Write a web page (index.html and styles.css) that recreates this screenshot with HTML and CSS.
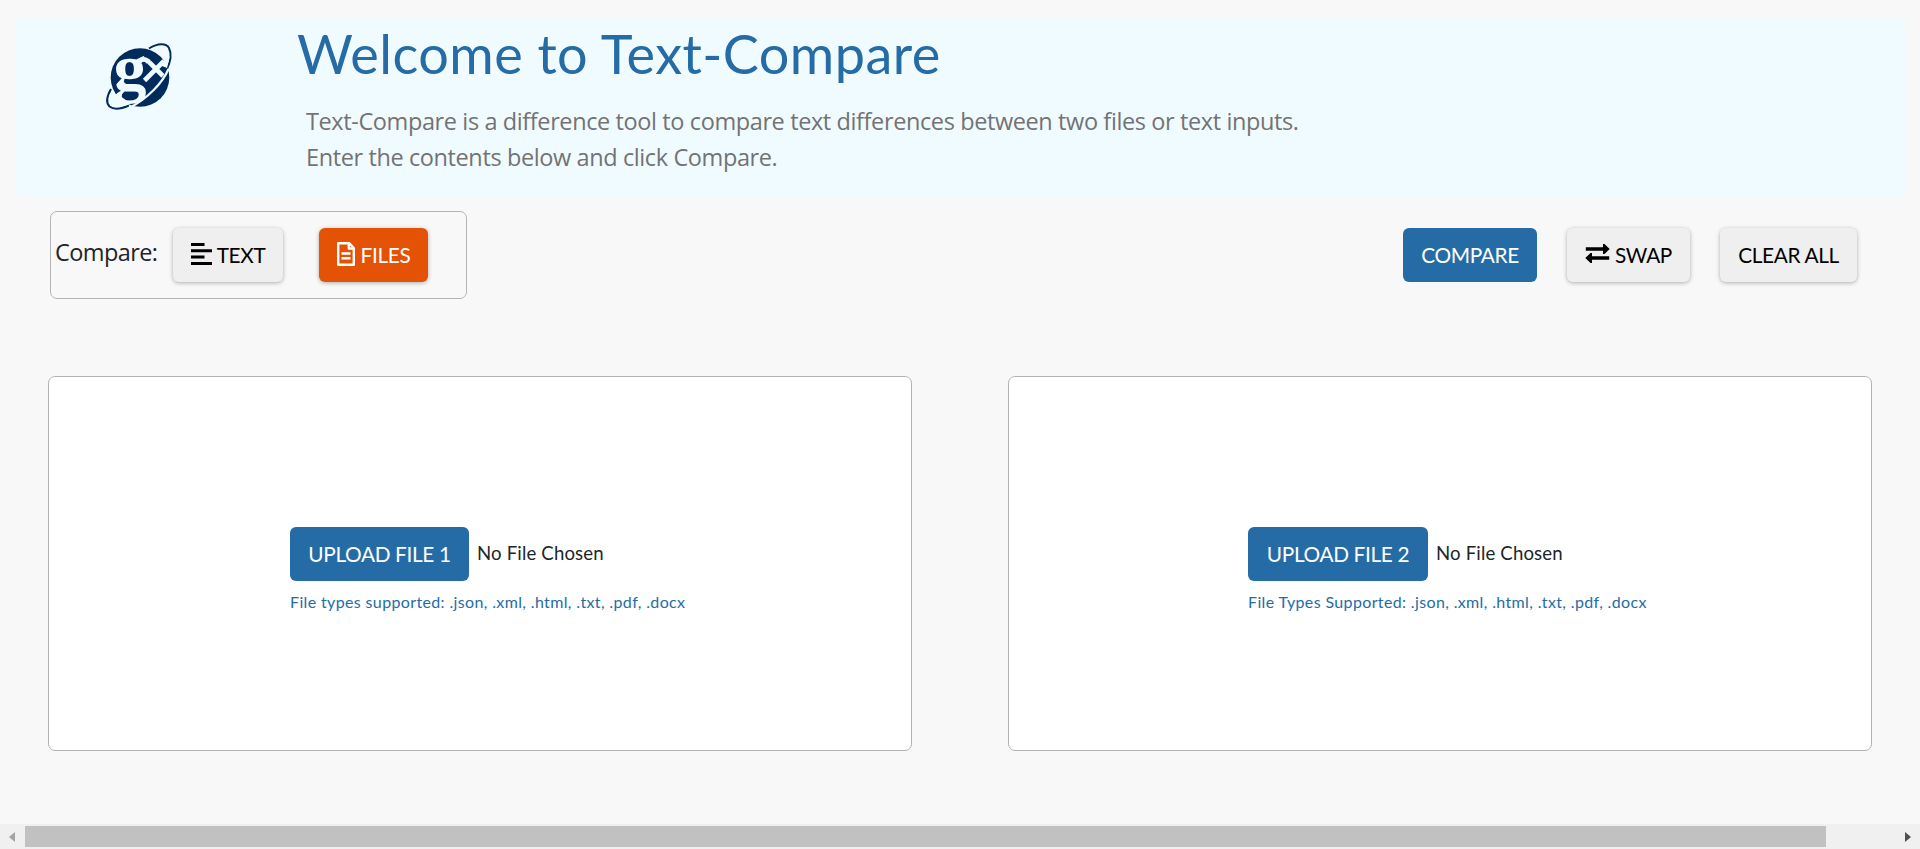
FILE: index.html
```html
<!DOCTYPE html>
<html lang="en">
<head>
<meta charset="utf-8">
<title>Text-Compare</title>
<link rel="stylesheet" href="styles.css">
</head>
<body>
<div class="page">
  <header class="banner">
    <svg class="logo" viewBox="0 0 70 70" aria-label="gx">
      <circle cx="35" cy="35.500" r="29.3" class="navy"/>
      <path class="ring" d="M44 6.500C53 1 61 1 64 6C67 12 65 21 61.500 28M6 47C2 54 1 61 4.500 64.500C9 68 17 66.500 24 63.500"/>
      <path class="ring-cut" d="M63.500 27C58 40 43 57 23 66.500"/>
      <path class="gap" d="M7.500 47L10.500 52.500L18 50L16 54.500L26 62L17 64.500L7 63.500L4.500 58Z"/>
      <path class="gap" d="M50 6L59 17L57 24L62 26L64.500 15L62 6Z"/>
      <text x="8.500" y="48" class="logo-g">g</text>
      <path class="arm" d="M39.500 38.500L59 19M40 19.500Q43 18 45 21L58 34M34 20Q38 15 44 19.500"/>
    </svg>
    <div class="intro">
      <h1 class="title">Welcome to Text-Compare</h1>
      <p class="lead">Text-Compare is a difference tool to compare text differences between two files or text inputs.<br>Enter the contents below and click Compare.</p>
    </div>
  </header>
  <div class="toolbar">
    <div class="mode">
      <span class="mode-label">Compare:</span>
      <button class="btn btn-text"><svg class="ico-lines" viewBox="0 0 21 22"><path d="M0 0h13.500v3H0zM0 6.300h21v3H0zM0 12.600h13.500v3H0zM0 18.900h21v3H0z"/></svg><span>TEXT</span></button>
      <button class="btn btn-files"><svg class="ico-file" viewBox="0 0 18 24"><path d="M1.200 1.200h11l4.600 4.800v16.800H1.200zM11.800 1.200v5.300h5M4.500 11.500h9M4.500 16.300h9"/></svg><span>FILES</span></button>
    </div>
    <div class="actions">
      <button class="btn btn-compare"><span>COMPARE</span></button>
      <button class="btn btn-swap"><svg class="ico-swap" viewBox="0 0 25 19"><path d="M.8 3.300H18V0h1.500L24.700 5l-5.200 5H18V6.700H.8zM24.200 15.700H7V19H5.500L.3 14l5.200-5H7v3.300h17.200z"/></svg><span>SWAP</span></button>
      <button class="btn btn-clear"><span>CLEAR ALL</span></button>
    </div>
  </div>
  <main class="cards">
    <section class="card card-one">
      <div class="picker"><button class="btn btn-upload"><span>UPLOAD FILE 1</span></button><span class="chosen">No File Chosen</span></div>
      <p class="types">File types supported: .json, .xml, .html, .txt, .pdf, .docx</p>
    </section>
    <section class="card card-two">
      <div class="picker"><button class="btn btn-upload"><span>UPLOAD FILE 2</span></button><span class="chosen">No File Chosen</span></div>
      <p class="types">File Types Supported: .json, .xml, .html, .txt, .pdf, .docx</p>
    </section>
  </main>
  <div class="scrollbar"><span class="arrow-left"></span><span class="thumb"></span><span class="arrow-right"></span></div>
</div>
</body>
</html>
```
FILE: styles.css
```css
* { box-sizing: border-box; }
html { height: 849px; overflow: hidden; }
body { margin: 0; height: 849px; background: #f8f8f8; color: #212529; font-family: Lato, sans-serif; overflow: hidden; }
.page { height: 849px; padding-top: 18px; display: flex; flex-direction: column; }
.banner { height: 180px; margin: 0 15px; background: #f0fbff; border-radius: 6px; display: flex; flex: none; }
.logo { width: 70px; height: 70px; margin: 24px 0 0 90px; flex: none; overflow: visible; }
.navy { fill: #002b5c; }
.ring { fill: none; stroke: #002b5c; stroke-width: 2; }
.ring-cut { fill: none; stroke: #f0fbff; stroke-width: 2.2; }
.gap { fill: #f0fbff; }
.arm { fill: none; stroke: #f0fbff; stroke-width: 4.6; }
.logo-g { fill: #f0fbff; font-family: "Liberation Serif", serif; font-weight: 700; font-size: 66px; }
.intro { margin-left: 122px; padding-top: 3px; white-space: nowrap; }
.title { margin: 0; font-size: 54px; line-height: 66px; font-weight: 400; letter-spacing: .45px; color: #256ca6; }
.lead { margin: 16px 0 0 9px; font-family: "Open Sans", sans-serif; font-size: 23.5px; line-height: 36px; letter-spacing: -.39px; color: #737373; }
.toolbar { height: 88px; margin: 13px 63px 0 50px; display: flex; justify-content: space-between; flex: none; }
.mode { width: 417px; height: 88px; border: 1px solid #b4b4b4; border-radius: 7px; display: flex; align-items: flex-start; padding: 16px 0 0 4px; }
.mode-label { width: 118px; font-family: "Open Sans", sans-serif; font-size: 23.5px; line-height: 48px; letter-spacing: -.6px; white-space: nowrap; }
.btn { height: 54px; padding: 0; border: 0; border-radius: 6px; background: #efefef; color: #000; font-family: Lato, sans-serif; font-size: 20.8px; line-height: 24px; letter-spacing: -.35px; display: flex; align-items: center; justify-content: center; white-space: nowrap; flex: none; box-shadow: 0 1px 4px rgba(0,0,0,.3); }
.btn-text { width: 110px; gap: 5px; }
.btn-files { width: 109px; margin-left: 36px; background: #e35205; color: #fff; gap: 6px; }
.ico-lines { width: 21px; height: 22px; margin-top: -3px; }
.ico-file { width: 18px; height: 24px; margin-top: -3px; fill: none; stroke: #fff; stroke-width: 2.4; stroke-linejoin: round; }
.ico-swap { width: 25px; height: 19px; margin-top: -3px; }
.actions { display: flex; padding-top: 17px; }
.btn-compare { width: 134px; }
.btn-swap { width: 123px; margin-left: 30px; gap: 5px; }
.btn-clear { width: 137px; margin-left: 30px; }
.btn-compare, .btn-upload { background: #256ca6; color: #fff; box-shadow: none; }
.cards { display: flex; gap: 96px; margin: 77px 48px 0; flex: none; }
.card { width: 864px; height: 375px; background: #fff; border: 1px solid #b4b4b4; border-radius: 7px; padding: 150px 0 0 241px; }
.card-two { padding-left: 239px; }
.picker { display: flex; align-items: center; gap: 8px; }
.btn-upload { width: 179px; }
.card-two .btn-upload { width: 180px; }
.chosen { font-size: 18.6px; line-height: 24px; letter-spacing: .15px; padding-bottom: 3px; white-space: nowrap; }
.types { margin: 11px 0 0; font-size: 16px; line-height: 20px; letter-spacing: .36px; color: #256ca6; white-space: nowrap; }
.scrollbar { height: 25px; margin-top: auto; background: #f0f0f0; display: flex; align-items: center; flex: none; }
.arrow-left { margin: 0 10px 0 9px; border: 5.5px solid transparent; border-left: 0; border-right: 6px solid #a3a3a3; }
.thumb { width: 1801px; height: 21px; background: #c1c1c1; }
.arrow-right { margin-left: 79px; border: 5.5px solid transparent; border-right: 0; border-left: 6px solid #505050; }
```
